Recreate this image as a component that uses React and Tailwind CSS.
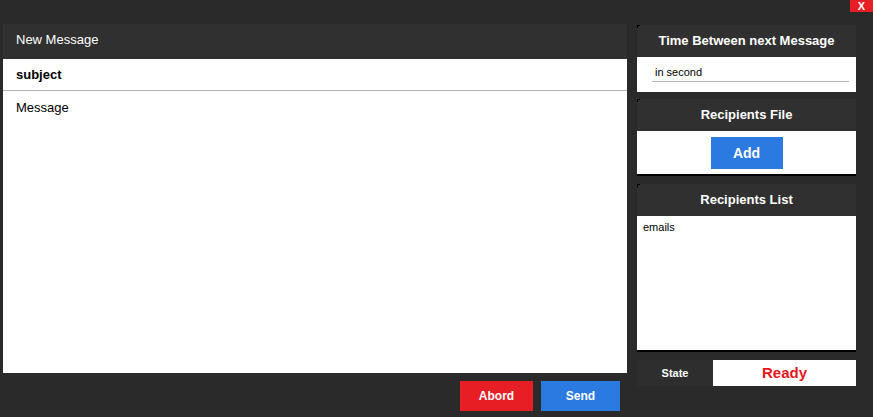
import React from 'react';

const PanelHeader = ({ children }) => (
    <div className="relative h-[32px] bg-[#303030] flex items-center justify-center text-white font-bold text-[13px]">
        <span className="absolute left-0 top-0 w-[3px] h-[3px] border-l border-t border-black" />
        {children}
    </div>
);

export default function App() {
    return (
        <div
            className="w-[873px] h-[417px] bg-[#2a2a2a] flex flex-col overflow-hidden"
            style={{ fontFamily: '"Liberation Sans", Arial, sans-serif' }}
        >
            <div className="h-[24px] flex justify-end items-start">
                <button className="w-[23px] h-[12px] bg-[#e81e25] text-white text-[11px] font-bold leading-[12px] flex items-center justify-center">
                    X
                </button>
            </div>

            <div className="flex pl-[3px]">
                {/* message editor */}
                <div className="w-[624px] flex flex-col">
                    <div className="h-[35px] bg-[#303030] flex items-center pl-[13px] pb-[3px] text-white text-[13px]">
                        New Message
                    </div>
                    <div className="h-[32px] bg-white border-b border-[#b4b4b4] flex items-center pl-[13px] text-[13px] font-bold text-black">
                        subject
                    </div>
                    <div className="h-[282px] bg-white pt-[7px] pl-[13px] text-[13px] text-black">
                        Message
                    </div>
                    <div className="flex justify-end gap-[8px] pr-[7px] mt-[8px]">
                        <button className="w-[73px] h-[30px] bg-[#e81e25] text-white text-[12px] font-bold">
                            Abord
                        </button>
                        <button className="w-[79px] h-[30px] bg-[#2a7ae2] text-white text-[12px] font-bold">
                            Send
                        </button>
                    </div>
                </div>

                {/* settings column */}
                <div className="w-[219px] ml-[10px] mt-[1px] flex flex-col">
                    <PanelHeader>Time Between next Message</PanelHeader>
                    <div className="h-[35px] bg-white pl-[15px] pr-[7px] pt-[6px]">
                        <div className="h-[19px] border-b border-[#b4b4b4] pl-[3px] text-[11px] text-black flex items-center">
                            in second
                        </div>
                    </div>

                    <div className="mt-[7px]">
                        <PanelHeader>Recipients File</PanelHeader>
                        <div className="h-[45px] bg-white border-b-2 border-black flex justify-center pt-[6px]">
                            <button className="w-[72px] h-[32px] bg-[#2a7ae2] text-white text-[14px] font-bold">
                                Add
                            </button>
                        </div>
                    </div>

                    <div className="mt-[8px]">
                        <PanelHeader>Recipients List</PanelHeader>
                        <div className="h-[136px] bg-white border-b-2 border-black pl-[6px] pt-[3px] text-[11px] text-black">
                            emails
                        </div>
                    </div>

                    <div className="mt-[8px] h-[26px] flex">
                        <div className="w-[76px] bg-[#2e2e2e] flex items-center justify-center text-white text-[11px] font-bold">
                            State
                        </div>
                        <div className="flex-1 bg-white flex items-center justify-center text-[#e8141c] text-[15px] font-bold">
                            Ready
                        </div>
                    </div>
                </div>
            </div>
        </div>
    );
}
